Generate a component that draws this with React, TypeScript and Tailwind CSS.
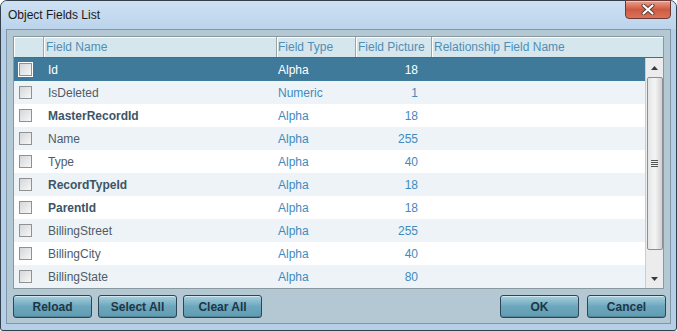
import React from "react";

type Row = { name: string; type: string; pic: string; bold?: boolean };

const rows: Row[] = [
  { name: "Id", type: "Alpha", pic: "18" },
  { name: "IsDeleted", type: "Numeric", pic: "1" },
  { name: "MasterRecordId", type: "Alpha", pic: "18", bold: true },
  { name: "Name", type: "Alpha", pic: "255" },
  { name: "Type", type: "Alpha", pic: "40" },
  { name: "RecordTypeId", type: "Alpha", pic: "18", bold: true },
  { name: "ParentId", type: "Alpha", pic: "18", bold: true },
  { name: "BillingStreet", type: "Alpha", pic: "255" },
  { name: "BillingCity", type: "Alpha", pic: "40" },
  { name: "BillingState", type: "Alpha", pic: "80" },
];

function CheckBox({ selected }: { selected?: boolean }) {
  return (
    <div
      className={
        "w-[13px] h-[13px] border border-[#8f9192] bg-gradient-to-br from-[#d4d6d8] to-[#f7f7f7] " +
        (selected ? "outline outline-1 outline-white" : "")
      }
    />
  );
}

function Btn({ label }: { label: string }) {
  return (
    <div className="w-[79px] h-[23px] rounded-[3px] border border-[#2b4656] bg-gradient-to-b from-[#a6d0dd] via-[#6ca7bd] to-[#5f9bb1] shadow-[inset_0_1px_0_rgba(255,255,255,0.5),inset_0_-1px_0_rgba(0,0,0,0.15)] flex items-center justify-center text-[12px] font-bold text-[#1e3646]">
      {label}
    </div>
  );
}

export default function App() {
  return (
    <div
      className="w-[677px] h-[331px] bg-white overflow-hidden"
      style={{ fontFamily: '"Liberation Sans", Arial, sans-serif' }}
    >
      <div className="w-full h-full flex flex-col border border-[#34404c] rounded-t-[7px] rounded-b-[3px] bg-[#b6cfe8]">
        {/* Title bar */}
        <div className="h-[28px] relative shrink-0 bg-gradient-to-b from-[#cde1f3] to-[#bcd4ec] rounded-t-[6px]">
          <span className="absolute left-[7px] top-[7px] text-[12px] leading-[14px] text-[#1a1a1a]">
            Object Fields List
          </span>
          <div className="absolute right-[5px] top-[-1px] w-[46px] h-[19px] rounded-b-[4px] border border-[#6b3a34] bg-gradient-to-b from-[#e9a08f] via-[#cf5a40] to-[#d8735a] flex items-center justify-center shadow-[inset_0_1px_0_rgba(255,255,255,0.4)]">
            <svg width="14" height="11" viewBox="0 0 14 11">
              <path d="M2.5 1.5 L11.5 9.5 M11.5 1.5 L2.5 9.5" stroke="#5a3a36" strokeWidth="4" strokeLinecap="round" />
              <path d="M2.5 1.5 L11.5 9.5 M11.5 1.5 L2.5 9.5" stroke="#ffffff" strokeWidth="2.2" strokeLinecap="round" />
            </svg>
          </div>
        </div>

        {/* Panel */}
        <div className="mx-[5px] mb-[6px] flex-1 border border-[#7f97a8] bg-[#b3c8d3] flex flex-col pt-[6px] pl-[6px] pr-[6px] pb-[5px]">
          {/* Table */}
          <div className="w-[651px] border border-[#8a989f] bg-white flex flex-col">
            {/* Header */}
            <div className="h-[21px] flex bg-[#d6e6ed] border-b border-[#5e666b] text-[12px] text-[#4f8fb6]">
              <div className="w-[30px] border-r border-[#9aa4a9] shadow-[inset_1px_1px_0_#fff]" />
              <div className="w-[233px] border-r border-[#9aa4a9] shadow-[inset_1px_1px_0_#fff] pl-[2px] flex items-center">Field Name</div>
              <div className="w-[79px] border-r border-[#9aa4a9] shadow-[inset_1px_1px_0_#fff] pl-[1px] flex items-center">Field Type</div>
              <div className="w-[76px] border-r border-[#9aa4a9] shadow-[inset_1px_1px_0_#fff] pl-[2px] flex items-center">Field Picture</div>
              <div className="flex-1 shadow-[inset_1px_1px_0_#fff] pl-[2px] flex items-center">Relationship Field Name</div>
            </div>
            {/* Body */}
            <div className="flex h-[230px]">
              <div className="w-[631px] flex flex-col">
                {rows.map((r, i) => {
                  const sel = i === 0;
                  const bg = sel ? "bg-[#3f7a9b]" : i % 2 === 1 ? "bg-[#edf3f6]" : "bg-white";
                  return (
                    <div key={r.name} className={"h-[23px] flex items-center text-[12px] " + bg}>
                      <div className="w-[30px] pl-[5px] flex items-center">
                        <CheckBox selected={sel} />
                      </div>
                      <div
                        className={
                          "w-[233px] pl-[4px] " +
                          (sel ? "text-white" : r.bold ? "font-bold text-[#3d5566]" : "text-[#4d5c68]")
                        }
                      >
                        {r.name}
                      </div>
                      <div className={"w-[79px] pl-[1px] " + (sel ? "text-white" : "text-[#3f8bc0]")}>{r.type}</div>
                      <div className={"w-[76px] pr-[14px] text-right " + (sel ? "text-white" : "text-[#3f8bc0]")}>{r.pic}</div>
                      <div className="flex-1" />
                    </div>
                  );
                })}
              </div>
              {/* Scrollbar */}
              <div className="w-[18px] border-l border-[#c9ced1] bg-[#ececec] flex flex-col items-center">
                <div className="h-[19px] w-full flex items-center justify-center">
                  <svg width="7" height="4" viewBox="0 0 7 4">
                    <path d="M0 4 L3.5 0 L7 4 Z" fill="#3a3a3a" />
                  </svg>
                </div>
                <div className="w-[16px] h-[173px] rounded-[2px] border border-[#8d8f91] bg-gradient-to-r from-[#e4e5e6] via-[#f4f4f4] to-[#d0d1d3] flex items-center justify-center">
                  <div className="flex flex-col gap-[1px]">
                    <div className="w-[7px] h-[1px] bg-[#555]" />
                    <div className="w-[7px] h-[1px] bg-[#555]" />
                    <div className="w-[7px] h-[1px] bg-[#555]" />
                    <div className="w-[7px] h-[1px] bg-[#555]" />
                  </div>
                </div>
                <div className="flex-1 w-full flex items-end justify-center pb-[7px]">
                  <svg width="7" height="4" viewBox="0 0 7 4">
                    <path d="M0 0 L7 0 L3.5 4 Z" fill="#3a3a3a" />
                  </svg>
                </div>
              </div>
            </div>
          </div>

          {/* Buttons */}
          <div className="mt-[6px] flex justify-between -mr-[2px]">
            <div className="flex gap-[6px]">
              <Btn label="Reload" />
              <Btn label="Select All" />
              <Btn label="Clear All" />
            </div>
            <div className="flex gap-[8px]">
              <Btn label="OK" />
              <Btn label="Cancel" />
            </div>
          </div>
        </div>
      </div>
    </div>
  );
}
